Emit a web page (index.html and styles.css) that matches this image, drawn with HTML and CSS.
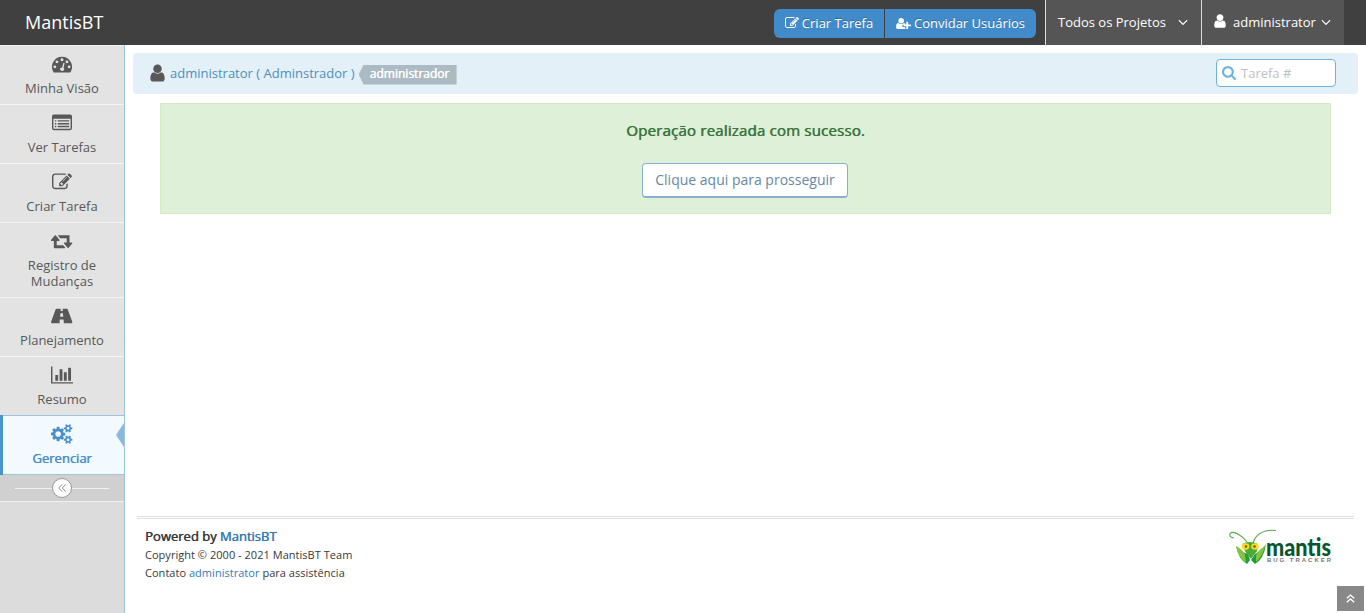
FILE: index.html
```html
<!DOCTYPE html>
<html lang="pt-BR">
<head>
<meta charset="utf-8">
<title>MantisBT</title>
<link rel="stylesheet" href="styles.css">
</head>
<body>
<svg class="defs" aria-hidden="true">
  <symbol id="user" viewBox="256 0 1280 1792"><path d="M1536 1399q0 109-62.500 187t-150.500 78h-854q-88 0-150.500-78t-62.500-187q0-85 8.500-160.500t31.500-152 58.500-131 94-89 134.500-34.500q131 128 313 128t313-128q76 0 134.500 34.500t94 89 58.500 131 31.500 152 8.500 160.500zm-256-887q0 159-112.500 271.500t-271.500 112.500-271.500-112.500-112.500-271.500 112.500-271.500 271.500-112.500 271.500 112.500 112.500 271.500z"/></symbol>
  <symbol id="edit" viewBox="0 0 1792 1792"><path d="M888 1184l116-116-152-152-116 116v56h96v96h56zm440-720q-16-16-33 1l-350 350q-17 17-1 33t33-1l350-350q17-17 1-33zm80 594v190q0 119-84.500 203.500t-203.500 84.500h-832q-119 0-203.500-84.500t-84.500-203.500v-832q0-119 84.500-203.500t203.500-84.500h832q63 0 117 25 15 7 18 23 3 17-9 29l-49 49q-14 14-32 8-23-6-45-6h-832q-66 0-113 47t-47 113v832q0 66 47 113t113 47h832q66 0 113-47t47-113v-126q0-13 9-22l64-64q15-15 35-7t20 29zm-96-738l288 288-672 672h-288v-288zm444 132l-92 92-288-288 92-92q28-28 68-28t68 28l152 152q28 28 28 68t-28 68z"/></symbol>
  <symbol id="chevron" viewBox="384 0 1024 1792"><path d="M1395 736q0 13-10 23l-466 466q-10 10-23 10t-23-10l-466-466q-10-10-10-23t10-23l50-50q10-10 23-10t23 10l393 393 393-393q10-10 23-10t23 10l50 50q10 10 10 23z"/></symbol>
</svg>

<header class="navbar">
  <a class="brand">MantisBT</a>
  <div class="nav-buttons">
    <a class="nav-btn"><svg class="i13"><use href="#edit"/></svg>Criar Tarefa</a>
    <a class="nav-btn"><svg class="i15" viewBox="0 0 2048 1792"><path d="M704 896a384 384 0 1 1 0-768 384 384 0 0 1 0 768zM1664 1024h352q32 0 32 32v192q0 32-32 32h-352v352q0 32-32 32h-192q-32 0-32-32v-352h-352q-32 0-32-32v-192q0-32 32-32h352v-352q0-32 32-32h192q32 0 32 32zM864 1248q0 66 47 113t113 47h256v230q-50 26-120 26h-910Q0 1664 0 1399q0-565 321-567 16 0 40 19 150 115 343 115t343-115q24-19 40-19 110 0 181 80v112h-244q-66 0-113 47t-47 113z"/></svg>Convidar Usuários</a>
  </div>
  <a class="drop projects">Todos os Projetos <svg class="chev"><use href="#chevron"/></svg></a>
  <a class="drop account"><svg class="nav-user"><use href="#user"/></svg><span>administrator</span><svg class="chev"><use href="#chevron"/></svg></a>
</header>

<div class="shell">
  <nav class="sidebar">
    <a class="item"><svg class="ico" viewBox="0 0 1792 1792"><path fill-rule="evenodd" d="M896 256A896 896 0 0 0 140 1633Q160 1664 195 1664H1597Q1632 1664 1652 1633A896 896 0 0 0 896 256zM256 1024a128 128 0 1 0 0 256 128 128 0 0 0 0-256zM448 576a128 128 0 1 0 0 256 128 128 0 0 0 0-256zM896 384a128 128 0 1 0 0 256 128 128 0 0 0 0-256zM1344 576a128 128 0 1 0 0 256 128 128 0 0 0 0-256zM1536 1024a128 128 0 1 0 0 256 128 128 0 0 0 0-256zM909 1203L1010 821Q1025 780 1067 784 1130 800 1124 854L1033 1236Q1110 1305 1082 1400 1030 1540 892 1530 720 1490 710 1345 720 1210 909 1203z"/></svg>Minha Visão</a>
    <a class="item"><svg class="ico" viewBox="0 128 1792 1792"><path fill-rule="evenodd" d="M160 256H1632Q1792 256 1792 416V1504Q1792 1664 1632 1664H160Q0 1664 0 1504V416Q0 256 160 256zM128 640V1504Q128 1536 160 1536H1632Q1664 1536 1664 1504V640zM256 768h128v128H256zM512 768h1024v128H512zM256 1024h128v128H256zM512 1024h1024v128H512zM256 1280h128v128H256zM512 1280h1024v128H512z"/></svg>Ver Tarefas</a>
    <a class="item"><svg class="ico"><use href="#edit"/></svg>Criar Tarefa</a>
    <a class="item"><svg class="ico wide" viewBox="0 128 1920 1792"><path d="M1280 1632q0 13-9.500 22.500t-22.500 9.500h-960q-8 0-13.500-2t-9-7-5.500-8-3-11.500-1-11.500v-600h-192q-26 0-45-19t-19-45q0-24 15-41l320-384q19-22 49-22t49 22l320 384q15 17 15 41 0 26-19 45t-45 19h-192v384h576q16 0 25 11l160 192q7 10 7 21zm640-416q0 24-15 41l-320 384q-20 23-49 23t-49-23l-320-384q-15-17-15-41 0-26 19-45t45-19h192v-384h-576q-16 0-25-12l-160-192q-7-9-7-20 0-13 9.500-22.500t22.500-9.500h960q8 0 13.500 2t9 7 5.500 8 3 11.500 1 11.500v600h192q26 0 45 19t19 45z"/></svg>Registro de Mudanças</a>
    <a class="item"><svg class="ico wide" viewBox="0 0 1920 1792"><path fill-rule="evenodd" d="M475 256H875L862 448H1058L1045 256H1445Q1483 256 1500 300L1893 1370Q1945 1536 1856 1536H1152L1130 1216H790L768 1536H64Q-25 1536 27 1370L420 300Q437 256 475 256zM847 640L822 960H1098L1073 640z"/></svg>Planejamento</a>
    <a class="item"><svg class="ico xwide" viewBox="0 0 2048 1792"><path d="M640 896v512h-256v-512h256zm384-512v1024h-256v-1024h256zm1024 1152v128h-2048v-1536h128v1408h1920zm-640-896v768h-256v-768h256zm384-384v1152h-256v-1152h256z"/></svg>Resumo</a>
    <a class="item active"><svg class="ico wide" viewBox="0 0 1920 1792"><path d="M896 896q0-106-75-181t-181-75-181 75-75 181 75 181 181 75 181-75 75-181zm768 512q0-52-38-90t-90-38-90 38-38 90q0 53 37.500 90.500t90.500 37.500 90.500-37.500 37.500-90.500zm0-1024q0-52-38-90t-90-38-90 38-38 90q0 53 37.500 90.500t90.500 37.500 90.500-37.500 37.500-90.500zm-384 421v185q0 10-7 19.500t-16 10.500l-155 24q-11 35-32 76 34 48 90 115 7 11 7 20 0 12-7 19-23 30-82.500 89.500t-78.500 59.500q-11 0-21-7l-115-90q-37 19-77 31-11 108-23 155-7 24-30 24h-186q-11 0-20-7.500t-10-17.500l-23-153q-34-10-75-31l-118 89q-7 7-20 7-11 0-21-8-144-133-144-160 0-9 7-19 10-14 41-53t47-61q-23-44-35-82l-152-24q-10-1-17-9.500t-7-19.500v-185q0-10 7-19.500t16-10.500l155-24q11-35 32-76-34-48-90-115-7-11-7-20 0-12 7-20 22-30 82-89t79-59q11 0 21 7l115 90q34-18 77-32 11-108 23-154 7-24 30-24h186q11 0 20 7.500t10 17.500l23 153q34 10 75 31l118-89q8-7 20-7 11 0 21 8 144 133 144 160 0 8-7 19-12 16-42 54t-45 60q23 48 34 82l152 23q10 2 17 10.500t7 19.500zm640 533v140q0 16-149 31-12 27-30 52 51 113 51 138 0 4-4 7-122 71-124 71-8 0-46-47t-52-68q-20 2-30 2t-30-2q-14 21-52 68t-46 47q-2 0-124-71-4-3-4-7 0-25 51-138-18-25-30-52-149-15-149-31v-140q0-16 149-31 13-29 30-52-51-113-51-138 0-4 4-7 4-2 35-20t59-34 30-16q8 0 46 46.500t52 67.500q20-2 30-2t30 2q51-71 92-112l6-2q4 0 124 70 4 3 4 7 0 25-51 138 17 23 30 52 149 15 149 31zm0-1024v140q0 16-149 31-12 27-30 52 51 113 51 138 0 4-4 7-122 71-124 71-8 0-46-47t-52-68q-20 2-30 2t-30-2q-14 21-52 68t-46 47q-2 0-124-71-4-3-4-7 0-25 51-138-18-25-30-52-149-15-149-31v-140q0-16 149-31 13-29 30-52-51-113-51-138 0-4 4-7 4-2 35-20t59-34 30-16q8 0 46 46.500t52 67.500q20-2 30-2t30 2q51-71 92-112l6-2q4 0 124 70 4 3 4 7 0 25-51 138 17 23 30 52 149 15 149 31z"/></svg>Gerenciar</a>
    <div class="collapse"><span class="knob"><svg width="8" height="8" viewBox="0 0 8 8"><path d="M4 .5L.8 4 4 7.500M7.500 .5L4.300 4l3.200 3.500"/></svg></span></div>
  </nav>

  <main class="main">
    <div class="crumbs">
      <svg class="crumb-user"><use href="#user"/></svg>
      <a class="crumb-link">administrator ( Adminstrador )</a>
      <span class="tag">administrador</span>
      <label class="search"><svg class="search-icon" viewBox="64 128 1664 1664"><path d="M1216 832q0-185-131.500-316.500t-316.500-131.500-316.500 131.500-131.500 316.500 131.500 316.500 316.500 131.500 316.500-131.500 131.500-316.500zm512 832q0 52-38 90t-90 38q-54 0-90-38l-343-342q-179 124-399 124-143 0-273.500-55.500t-225-150-150-225-55.500-273.500 55.500-273.500 150-225 225-150 273.500-55.500 273.500 55.500 225 150 150 225 55.500 273.500q0 220-124 399l343 343q37 37 37 90z"/></svg><input class="search-input" placeholder="Tarefa #"></label>
    </div>
    <section class="alert">
      <p class="message">Operação realizada com sucesso.</p>
      <a class="proceed">Clique aqui para prosseguir</a>
    </section>
    <footer class="footer">
      <div class="credits">
        <div class="powered">Powered by <a>MantisBT</a></div>
        <div>Copyright © 2000 - 2021 MantisBT Team</div>
        <div>Contato <a>administrator</a> para assistência</div>
      </div>
      <svg class="logo" width="104" height="40" viewBox="0 0 104 40">
        <path class="antenna" d="M20 15C16 7 5 1 2 4.500q-1 4 4 4.500M25 14C27 7 34 0 48 1.500"/>
        <path fill="#239b3b" d="M8 17q3 5 12 8l2 6-3 4q-8-4-11-18z"/>
        <path fill="#83c441" d="M8 17q8 4 9 9l1 8q-8-5-10-17z"/>
        <path fill="#239b3b" d="M38 15q-3 6-11 10l-4 6 4 4q9-5 11-20z"/>
        <path fill="#83c441" d="M37 17q-8 5-9 10v6q7-6 9-16z"/>
        <path fill="#4aab39" d="M14 15q8-4 16 0l-1 7q-3 4-6 8-4-4-6-8z"/>
        <ellipse cx="17.500" cy="17.500" rx="3.800" ry="3.300" fill="#f5dc25"/><ellipse cx="27" cy="17.500" rx="3.800" ry="3.300" fill="#f5dc25"/>
        <circle cx="18" cy="17.500" r="1.200" fill="#6b5310"/><circle cx="26.500" cy="17.500" r="1.200" fill="#6b5310"/>
        <text class="logo-name" x="38" y="27" textLength="65" lengthAdjust="spacingAndGlyphs">mantis</text>
        <text class="logo-sub" x="39" y="32.500" textLength="64" lengthAdjust="spacing">BUG TRACKER</text>
      </svg>
    </footer>
  </main>
</div>
<a class="scroll-up"><svg width="9" height="9" viewBox="0 0 9 9"><path d="M.8 4.300L4.500 1l3.700 3.300M.8 8.200l3.700-3.300 3.700 3.300"/></svg></a>
</body>
</html>
```
FILE: styles.css
```css
* { box-sizing: border-box; }
body {
  margin: 0;
  min-height: 613px;
  display: flex;
  flex-direction: column;
  position: relative;
  font: 13px/16px "Open Sans", sans-serif;
  color: #393939;
  background: #fff;
}
svg { fill: currentColor; flex: none; }
.defs { position: absolute; width: 0; height: 0; }

.navbar {
  height: 45px;
  display: flex;
  align-items: center;
  padding: 0 22px 0 25px;
  background: #404040;
  color: #fff;
}
.brand { font-size: 18px; line-height: 24px; margin-right: auto; padding-bottom: 2px; }
.nav-buttons { display: flex; gap: 1px; margin: 2px 9px 0 0; border-radius: 6px; overflow: hidden; }
.nav-btn {
  height: 29px;
  display: flex;
  align-items: center;
  justify-content: center;
  gap: 3px;
  padding-bottom: 2px;
  background: #428bca;
  text-shadow: 0 -1px 0 rgba(0, 0, 0, .25);
  width: 110px;
}
.nav-btn + .nav-btn { width: 151px; }
.i13 { width: 14px; height: 14px; margin-top: 1px; }
.i15 { width: 15px; height: 13px; margin-top: 1px; }
.drop {
  height: 45px;
  display: flex;
  align-items: center;
  padding-bottom: 2px;
  border-left: 1px solid #ddd;
  background: #555;
}
.projects { width: 156px; padding-left: 12px; }
.account { width: 143px; padding-left: 12px; }
.nav-user { width: 12px; height: 16px; margin: -1px 7px 0 0; }
.projects .chev { margin-left: 12px; }
.account .chev { margin-left: 5px; }
.chev { width: 10px; height: 16px; }

.shell { flex: 1; display: flex; }
.sidebar {
  width: 125px;
  border-right: 1px solid #9fc5de;
  background: #dcdcdc;
  text-align: center;
}
.item {
  position: relative;
  display: flex;
  flex-direction: column;
  align-items: center;
  gap: 6px;
  padding: 8px 20px;
  border-top: 1px solid #f4f4f4;
  background: #e3e3e3;
  color: #585858;
}
.ico { width: 20px; height: 20px; }
.ico.wide { width: 21.400px; }
.ico.xwide { width: 22.900px; }
.active {
  border-top-color: #9fc5de;
  border-bottom: 1px solid #9fc5de;
  background: #f2f9ff;
  color: #4b8fc9;
  text-shadow: .5px 0 0 currentColor;
}
.active::before {
  content: "";
  position: absolute;
  left: 0;
  top: -1px;
  bottom: -1px;
  width: 3px;
  background: #4b93ce;
}
.active::after {
  content: "";
  position: absolute;
  right: 0;
  top: 7px;
  border: solid transparent;
  border-width: 12px 8px 12px 0;
  border-right-color: #8ab8d7;
}
.collapse {
  height: 27px;
  display: flex;
  align-items: center;
  padding: 0 15px;
  border-bottom: 1px solid #f0f0f0;
  background: #d0d0d0;
}
.collapse::before, .collapse::after { content: ""; flex: 1; height: 1px; background: #f0f0f0; }
.knob {
  width: 20px;
  height: 20px;
  display: flex;
  align-items: center;
  justify-content: center;
  border: 1px solid #999;
  border-radius: 50%;
  background: #fff;
}
.knob svg { fill: none; stroke: #888; }

.main { flex: 1; display: flex; flex-direction: column; padding: 8px 8px 0; }
.crumbs {
  height: 41px;
  display: flex;
  align-items: center;
  padding: 0 22px 1px 16px;
  border-radius: 4px;
  background: #e4f0f7;
}
.crumb-user { width: 15px; height: 20px; margin: 0 6px 0 1px; color: #585858; }
.crumb-link { margin-left: -1px; color: #4c8fbd; }
.tag {
  height: 20px;
  margin: 3px auto 0 4px;
  padding: 1px 7px 0 11px;
  background: #abbac3;
  color: #fff;
  font-size: 12px;
  text-shadow: .5px 0 0 currentColor;
  clip-path: polygon(5px 0, 100% 0, 100% 100%, 5px 100%, 0 50%);
  width: 98px;
}
.search {
  width: 120px;
  height: 28px;
  display: flex;
  align-items: center;
  gap: 5px;
  padding: 0 5px;
  border: 1px solid #6fb3e0;
  border-radius: 4px;
  background: #fff;
}
.search-icon { width: 14px; height: 14px; margin-top: -1px; color: #6fb3e0; }
.search-input { width: 80px; padding: 0; border: 0; outline: 0; background: none; font: inherit; }
.search-input::placeholder { color: #c0c0c0; opacity: 1; }

.alert {
  height: 111px;
  margin: 9px 27px 0;
  padding-top: 16px;
  border: 1px solid #d6e9c6;
  background: #dff0d8;
  text-align: center;
}
.message { margin: 0 0 22px; font-size: 15px; line-height: 21px; color: #3c763d; letter-spacing: .2px; text-shadow: .6px 0 0 currentColor; }
.proceed {
  display: inline-block;
  height: 35px;
  width: 206px;
  margin-right: 1px;
  border: 1px solid #8aafce;
  border-bottom-width: 2px;
  border-radius: 4px;
  background: #fff;
  color: #6688a6;
  font-size: 14px;
  line-height: 32px;
}
.footer {
  height: 97px;
  margin: auto 4px 0;
  padding: 8px 22px 0 8px;
  display: flex;
  justify-content: space-between;
  align-items: flex-start;
  border-top: 3px double #e0e0e0;
}
.credits { font-size: 11px; line-height: 18px; letter-spacing: .03px; }
.credits a { color: #337ab7; }
.powered { font-size: 13px; line-height: 19px; letter-spacing: 0; text-shadow: .5px 0 0 currentColor; }
.powered a { text-shadow: .5px 0 0 currentColor; }
.logo { margin-top: 2px; }
.antenna { fill: none; stroke: #58aa50; stroke-width: 1.100px; }
.logo-name { font: 900 24px Lato, sans-serif; fill: #08562f; }
.logo-sub { font: 700 6px "Liberation Sans", sans-serif; fill: #777; }
.scroll-up {
  position: absolute;
  right: 2px;
  bottom: 2px;
  width: 27px;
  height: 25px;
  display: flex;
  align-items: center;
  justify-content: center;
  background: #888;
}
.scroll-up svg { fill: none; stroke: #fff; stroke-width: 1.300px; }
```
